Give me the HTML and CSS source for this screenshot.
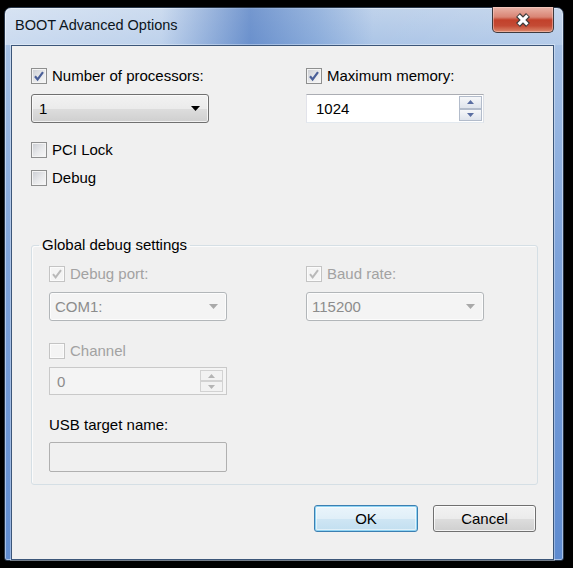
FILE: index.html
```html
<!DOCTYPE html>
<html lang="en">
<head>
    <meta charset="UTF-8">
    <title>BOOT Advanced Options</title>
    <link rel="stylesheet" href="styles.css">
</head>
<body>
    <div class="window">
        <div class="titlebar">
            <span class="title">BOOT Advanced Options</span>
            <div class="close">
                <svg width="16" height="14" viewBox="0 0 16 14">
                    <path d="M3 2 L13 12 M13 2 L3 12" stroke="#3b3b3b" stroke-width="5.6" fill="none"/>
                    <path d="M3.6 2.6 L12.4 11.4 M12.4 2.6 L3.6 11.4" stroke="#fff" stroke-width="3.2" fill="none"/>
                </svg>
            </div>
        </div>

        <div class="client">
            <div class="pair">
                <div class="check">
                    <span class="box"><svg width="12" height="12" viewBox="0 0 12 12"><path d="M2 6.2 L4.6 9.4 L10 2.2" stroke="#4a5f98" stroke-width="2.2" fill="none"/></svg></span>
                    Number of processors:
                </div>
                <div class="check">
                    <span class="box"><svg width="12" height="12" viewBox="0 0 12 12"><path d="M2 6.2 L4.6 9.4 L10 2.2" stroke="#4a5f98" stroke-width="2.2" fill="none"/></svg></span>
                    Maximum memory:
                </div>
                <div class="combo">
                    <span class="value">1</span>
                    <svg width="9" height="5" viewBox="0 0 9 5"><path d="M0 0 H9 L4.5 5 Z" fill="#000"/></svg>
                </div>
                <div class="spin">
                    <span class="value">1024</span>
                    <div class="spin-btns">
                        <span><svg width="7" height="4" viewBox="0 0 7 4"><path d="M0 4 L3.5 0 L7 4 Z" fill="#5a6ea2"/></svg></span>
                        <span><svg width="7" height="4" viewBox="0 0 7 4"><path d="M0 0 L3.5 4 L7 0 Z" fill="#5a6ea2"/></svg></span>
                    </div>
                </div>
            </div>

            <div class="check solo pci"><span class="box"></span>PCI Lock</div>
            <div class="check solo debug"><span class="box"></span>Debug</div>

            <fieldset class="group">
                <legend>Global debug settings</legend>
                <div class="group-body">
                    <div class="pair inner">
                        <div class="check off">
                            <span class="box"><svg width="12" height="12" viewBox="0 0 12 12"><path d="M2 6.2 L4.6 9.4 L10 2.2" stroke="#b9b9b9" stroke-width="2" fill="none"/></svg></span>
                            Debug port:
                        </div>
                        <div class="check off">
                            <span class="box"><svg width="12" height="12" viewBox="0 0 12 12"><path d="M2 6.2 L4.6 9.4 L10 2.2" stroke="#b9b9b9" stroke-width="2" fill="none"/></svg></span>
                            Baud rate:
                        </div>
                        <div class="combo off">
                            <span class="value">COM1:</span>
                            <svg width="9" height="5" viewBox="0 0 9 5"><path d="M0 0 H9 L4.5 5 Z" fill="#a9a9a9"/></svg>
                        </div>
                        <div class="combo off">
                            <span class="value">115200</span>
                            <svg width="9" height="5" viewBox="0 0 9 5"><path d="M0 0 H9 L4.5 5 Z" fill="#a9a9a9"/></svg>
                        </div>
                    </div>

                    <div class="check off channel"><span class="box"></span>Channel</div>
                    <div class="spin off">
                        <span class="value">0</span>
                        <div class="spin-btns">
                            <span><svg width="7" height="4" viewBox="0 0 7 4"><path d="M0 4 L3.5 0 L7 4 Z" fill="#b4b4b4"/></svg></span>
                            <span><svg width="7" height="4" viewBox="0 0 7 4"><path d="M0 0 L3.5 4 L7 0 Z" fill="#b4b4b4"/></svg></span>
                        </div>
                    </div>

                    <div class="field-label">USB target name:</div>
                    <div class="textbox"></div>
                </div>
            </fieldset>

            <div class="buttons">
                <div class="btn default">OK</div>
                <div class="btn">Cancel</div>
            </div>
        </div>
    </div>
</body>
</html>
```

FILE: styles.css
```css
* {
    box-sizing: border-box;
}

body {
    margin: 0;
    background-color: #000;
    font-family: "Liberation Sans", Arial, sans-serif;
    font-size: 15px;
    color: #000;
}

/* window frame */
.window {
    width: 560px;
    height: 554px;
    margin: 7px 0 0 4px;
    display: flex;
    flex-direction: column;
    border: 1px solid #27364a;
    border-radius: 7px 7px 3px 3px;
    background: linear-gradient(to bottom, #bcd0ea 0px, #a3bfe4 45px, #7ea3da 250px, #5e8bd0 554px);
    box-shadow: inset 0 0 0 1px rgba(255, 255, 255, 0.45);
}

.titlebar {
    height: 37px;
    display: flex;
    justify-content: space-between;
    align-items: flex-start;
    padding-left: 10px;
    border-radius: 6px 6px 0 0;
    background: linear-gradient(to right,
        rgba(255, 255, 255, 0.4) 0%,
        rgba(255, 255, 255, 0.25) 28%,
        rgba(45, 95, 180, 0.5) 44%,
        rgba(70, 120, 195, 0.3) 56%,
        rgba(255, 255, 255, 0.05) 66%,
        rgba(255, 255, 255, 0.15) 100%);
}

.title {
    padding-top: 8px;
    line-height: 18px;
    font-size: 14.5px;
    color: #0c1520;
}

.close {
    width: 62px;
    height: 26px;
    margin: -1px 9px 0 0;
    display: flex;
    align-items: center;
    justify-content: center;
    border: 1px solid #3f3a3e;
    border-top: none;
    border-radius: 0 0 5px 5px;
    background: linear-gradient(to bottom, #e9b4a8 0%, #d98575 40%, #c2412b 52%, #c44a34 75%, #dc8a6e 100%);
    box-shadow: inset 0 0 0 1px rgba(255, 220, 210, 0.45);
}

.client {
    flex: 1;
    margin: 0 9px 0 6px;
    padding: 21px 15px 19px 19px;
    background-color: #f0f0f0;
    border: 1px solid #3c5679;
    box-shadow: 0 0 0 1px rgba(255, 255, 255, 0.35);
}

/* two column rows */
.pair {
    display: grid;
    grid-template-columns: 178px 178px;
    grid-template-rows: 18px 29px;
    column-gap: 97px;
    row-gap: 9px;
}

.pair.inner {
    column-gap: 79px;
}

/* checkboxes */
.check {
    display: flex;
    align-items: center;
    height: 18px;
    line-height: 18px;
    white-space: nowrap;
}

.box {
    width: 16px;
    height: 16px;
    flex: none;
    margin-right: 5px;
    display: flex;
    align-items: center;
    justify-content: center;
    border: 1px solid #8e8f8f;
    background: linear-gradient(135deg, #c9ccd2 0%, #e8e9eb 55%, #f8f8f8 100%);
    box-shadow: inset 0 0 0 1px #f4f4f4;
}

.check.off {
    color: #a2a2a2;
}

.check.off .box {
    border-color: #c4c4c4;
    background: #f4f4f4;
    box-shadow: inset 0 0 0 1px #fbfbfb;
}

.pci {
    margin-top: 18px;
}

.debug {
    margin-top: 10px;
}

/* combo boxes */
.combo {
    height: 29px;
    display: flex;
    align-items: center;
    justify-content: space-between;
    padding: 0 8px 0 7px;
    border: 1px solid #707070;
    border-radius: 3px;
    background: linear-gradient(to bottom, #f2f2f2 0%, #ebebeb 50%, #dddddd 51%, #cfcfcf 100%);
    box-shadow: inset 0 0 0 1px rgba(255, 255, 255, 0.7);
}

.combo.off {
    padding-left: 5px;
    border-color: #b2b6b9;
    background: #f4f4f4;
    color: #8c8c8c;
}

/* spin edits */
.spin {
    width: 178px;
    height: 29px;
    display: flex;
    align-items: center;
    padding-left: 9px;
    border: 1px solid;
    border-color: #abadb3 #dbdfe6 #e3e9ef #e2e3ea;
    background-color: #fff;
}

.spin .value {
    flex: 1;
}

.spin-btns {
    width: 24px;
    height: 100%;
    display: flex;
    flex-direction: column;
    padding: 1px 1px 1px 0;
}

.spin-btns span {
    flex: 1;
    display: flex;
    align-items: center;
    justify-content: center;
    border: 1px solid #b3bccb;
    background: linear-gradient(to bottom, #f6f7f9, #dfe4ec);
}

.spin.off {
    height: 28px;
    margin-top: 7px;
    padding-left: 7px;
    border-color: #c9c9c9;
    background-color: #f4f4f4;
    color: #8c8c8c;
}

.spin.off .spin-btns {
    width: 26px;
    padding: 2px 3px 2px 0;
}

.spin.off .spin-btns span {
    border-color: #d2d2d2;
    background: #f2f2f2;
}

/* group box */
.group {
    margin: 49px 0 0;
    padding: 0;
    min-width: 0;
    border: 1px solid #d5dfe5;
    border-radius: 3px;
    box-shadow: inset 1px 1px 0 #fbfbfb;
}

.group legend {
    margin-left: 7px;
    padding: 0 3px;
    line-height: 18px;
}

.group-body {
    padding: 11px 0 12px 17px;
}

.channel {
    margin-top: 21px;
}

.field-label {
    margin-top: 21px;
    height: 18px;
    line-height: 18px;
}

.textbox {
    width: 178px;
    height: 30px;
    margin-top: 8px;
    border: 1px solid #b0b0b0;
    border-radius: 2px;
    background-color: #f0f0f0;
}

/* dialog buttons */
.buttons {
    display: flex;
    justify-content: flex-end;
    gap: 15px;
    margin-top: 20px;
    padding-right: 2px;
}

.btn {
    width: 103px;
    height: 27px;
    display: flex;
    align-items: center;
    justify-content: center;
    border: 1px solid #707070;
    border-radius: 3px;
    background: linear-gradient(to bottom, #f2f2f2 0%, #ebebeb 50%, #dddddd 51%, #cfcfcf 100%);
    box-shadow: inset 0 0 0 1px rgba(255, 255, 255, 0.75);
}

.btn.default {
    width: 104px;
    border-color: #3c7fb1;
    background: linear-gradient(to bottom, #eaf5fb 0%, #e0eff8 50%, #cfe6f4 51%, #c2dff0 100%);
    box-shadow: inset 0 0 0 1px #8fd3f3, inset 0 0 0 2px rgba(255, 255, 255, 0.5);
}
```
